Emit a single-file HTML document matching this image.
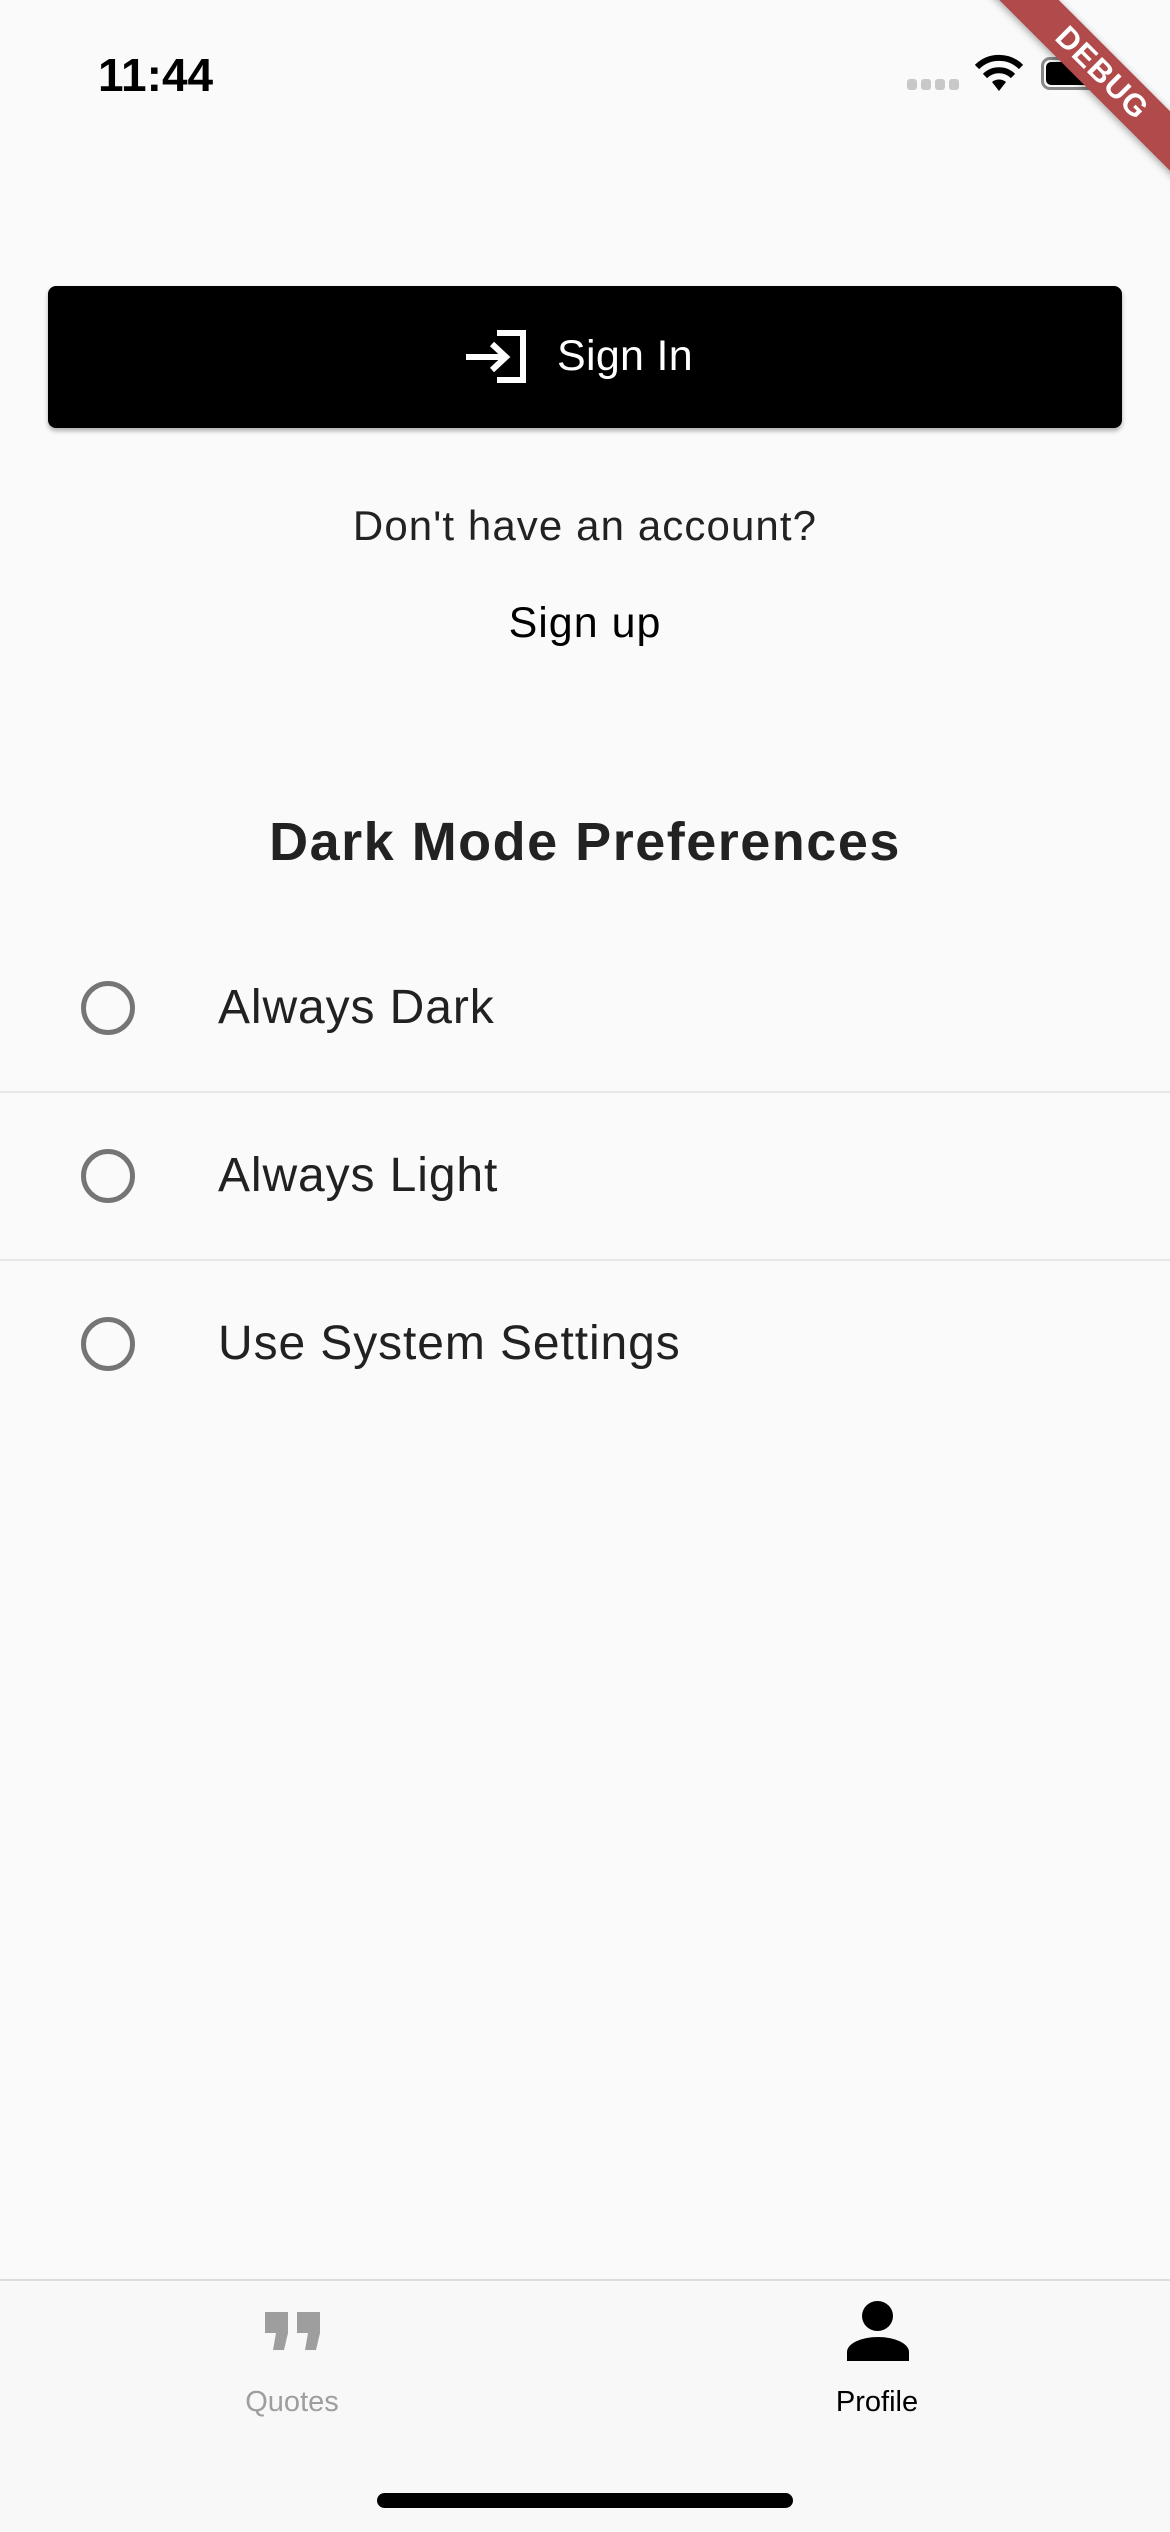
<!DOCTYPE html>
<html><head><meta charset="utf-8"><style>
*{margin:0;padding:0;box-sizing:border-box}
html,body{width:1170px;height:2532px;background:#fafafa;overflow:hidden;font-family:"Liberation Sans",sans-serif}
.t{position:absolute;white-space:nowrap}
.c{left:0;width:1170px;text-align:center}
.radio{position:absolute;left:81px;width:54px;height:54px;border:5px solid #757575;border-radius:50%}
.lbl{position:absolute;left:218px;font-size:48px;line-height:48px;color:#212121;letter-spacing:0.9px;white-space:nowrap}
.div{position:absolute;left:0;width:1170px;height:2px;background:#e6e6e6}
</style></head><body>
<div class="t" style="left:98px;top:52px;font-size:46px;line-height:46px;font-weight:bold;color:#000">11:44</div>
<div style="position:absolute;left:907px;top:79px">
<span style="position:absolute;left:0;width:10px;height:11px;border-radius:3px;background:#c8c8c8"></span>
<span style="position:absolute;left:14px;width:10px;height:11px;border-radius:3px;background:#c8c8c8"></span>
<span style="position:absolute;left:28px;width:10px;height:11px;border-radius:3px;background:#c8c8c8"></span>
<span style="position:absolute;left:42px;width:10px;height:11px;border-radius:3px;background:#c8c8c8"></span>
</div>
<svg style="position:absolute;left:973px;top:54px" width="52" height="38" viewBox="0 0 52 38">
<path d="M26 37 L19 28 A11 11 0 0 1 33 28 Z" fill="#000"/>
<path d="M12 22 A20 20 0 0 1 40 22" stroke="#000" stroke-width="6" fill="none"/>
<path d="M4 13 A31 31 0 0 1 48 13" stroke="#000" stroke-width="6" fill="none"/>
</svg>
<div style="position:absolute;left:1041px;top:57px;width:67px;height:33px;border:3px solid #888;border-radius:9px"></div>
<div style="position:absolute;left:1046px;top:62px;width:55px;height:23px;background:#000;border-radius:5px"></div>
<div style="position:absolute;left:902px;top:52px;width:400px;height:42px;background:#b14a4a;transform:rotate(45deg);box-shadow:0 2px 8px rgba(0,0,0,.35);color:#fff;font-weight:bold;font-size:31px;line-height:42px;text-align:center;letter-spacing:1px">DEBUG</div>

<div style="position:absolute;left:48px;top:286px;width:1074px;height:142px;background:#000;border-radius:8px;box-shadow:0 3px 5px rgba(0,0,0,.3)"></div>
<svg style="position:absolute;left:460px;top:325px" width="72" height="64" viewBox="460 325 72 64">
<path d="M497 333 H523 V380 H497" stroke="#fff" stroke-width="6" fill="none"/>
<path d="M466 357 H505 M492 344 L506 357 L492 370" stroke="#fff" stroke-width="6" fill="none"/>
</svg>
<div class="t" style="left:557px;top:335px;font-size:43px;line-height:43px;color:#fff;font-weight:500;letter-spacing:0.3px">Sign In</div>

<div class="t c" style="top:505px;font-size:42px;line-height:42px;color:#222;letter-spacing:1.1px">Don't have an account?</div>
<div class="t c" style="top:602px;font-size:43px;line-height:43px;color:#000;letter-spacing:1px">Sign up</div>
<div class="t c" style="top:815px;font-size:54px;line-height:54px;color:#222;font-weight:bold;letter-spacing:1.5px">Dark Mode Preferences</div>

<div class="radio" style="top:981px"></div>
<div class="lbl" style="top:984px">Always Dark</div>
<div class="div" style="top:1091px"></div>
<div class="radio" style="top:1149px"></div>
<div class="lbl" style="top:1152px">Always Light</div>
<div class="div" style="top:1259px"></div>
<div class="radio" style="top:1317px"></div>
<div class="lbl" style="top:1320px">Use System Settings</div>

<div style="position:absolute;left:0;top:2279px;width:1170px;height:253px;background:#f8f8f8;border-top:2px solid #dcdcdc"></div>
<svg style="position:absolute;left:264px;top:2311px" width="58" height="40" viewBox="0 0 58 40">
<path d="M1 1 H24 V22 L20 39 H9 L12 22 H1 Z" fill="#9e9e9e"/>
<path d="M33 1 H56 V22 L52 39 H41 L44 22 H33 Z" fill="#9e9e9e"/>
</svg>
<div class="t" style="left:192px;width:200px;text-align:center;top:2388px;font-size:29px;line-height:29px;color:#9e9e9e">Quotes</div>
<svg style="position:absolute;left:846px;top:2300px" width="64" height="62" viewBox="0 0 64 62">
<ellipse cx="31.5" cy="16" rx="15.5" ry="15" fill="#000"/>
<path d="M1 61 V52 A31 15 0 0 1 63 52 V61 Z" fill="#000"/>
</svg>
<div class="t" style="left:777px;width:200px;text-align:center;top:2388px;font-size:29px;line-height:29px;color:#000">Profile</div>
<div style="position:absolute;left:377px;top:2493px;width:416px;height:15px;border-radius:8px;background:#000"></div>
</body></html>
